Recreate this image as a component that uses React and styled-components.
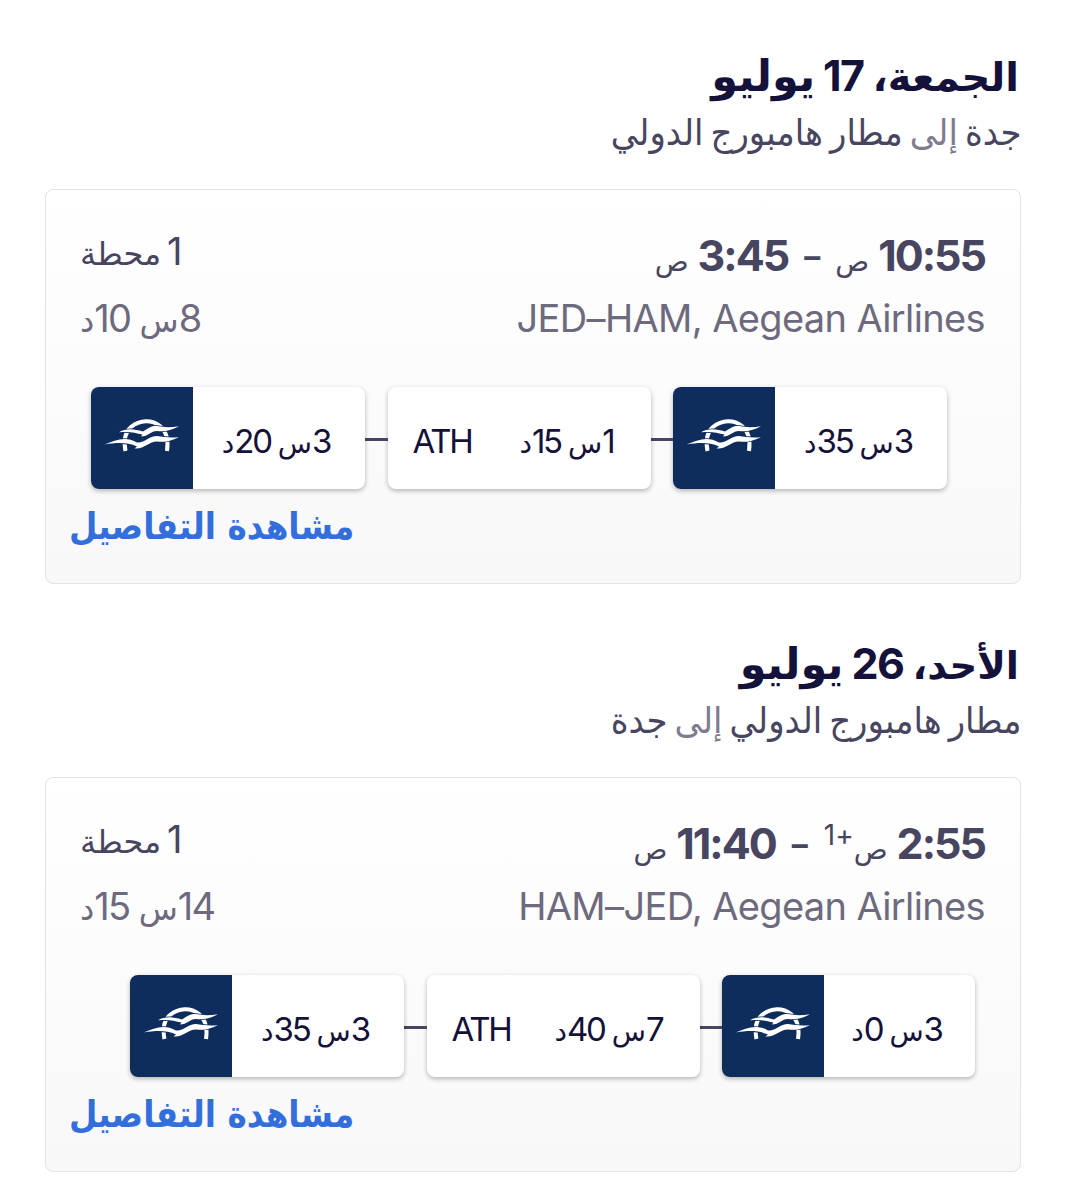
import React from "react";
import styled, { createGlobalStyle } from "styled-components";

const Global = createGlobalStyle`
  *, *::before, *::after { box-sizing: border-box; }
  body { margin: 0; background: #fff; }
`;

const Page = styled.main`
  width: 1065px;
  height: 1200px;
  overflow: hidden;
  padding: 45px 44px 0 45px;
  direction: rtl;
  font-family: Inter, "DejaVu Sans", sans-serif;
  color: #484560;
`;

const Leg = styled.section`
  height: 588px;
`;

const Heading = styled.h2`
  display: flex;
  align-items: baseline;
  height: 60px;
  margin: 0;
  padding-right: 2px;
  line-height: 60px;
  font-size: 43px;
  font-weight: 700;
  color: #14113a;
`;

const DayNumber = styled.span`
  margin: 0 9px 0 8px;
  letter-spacing: -1.5px;
`;

const Route = styled.p`
  height: 84px;
  margin: 0;
  line-height: 56px;
  white-space: nowrap;
`;

const Ar = styled.span`
  display: inline-block;
  font-family: "DejaVu Sans", sans-serif;
  font-size: ${(p) => p.$size}px;
  letter-spacing: 0;
  word-spacing: ${(p) => p.$gap || 0}px;
  transform: scaleX(${(p) => p.$stretch || 1});
  transform-origin: ${(p) => p.$origin || "right"};
  white-space: pre;
`;

const Muted = styled.span`
  color: #7f7c90;
`;

const Card = styled.article`
  width: 976px;
  height: 395px;
  padding: 33px 35px 0 34px;
  border: 1px solid #e2e2e8;
  border-radius: 8px;
  background: linear-gradient(#fff, #f8f8f9);
`;

const Row = styled.div`
  display: flex;
  justify-content: space-between;
  align-items: baseline;
  height: ${(p) => p.$h}px;
  line-height: ${(p) => p.$h}px;
  white-space: nowrap;
`;

const Times = styled.div`
  display: flex;
  align-items: baseline;
  font-size: 43px;
  font-weight: 700;
`;

const Time = styled.span`
  margin-right: -2px;
  padding-right: 2px;
  letter-spacing: -2px;
  direction: ltr;
`;

const Period = styled.span`
  margin-right: 9px;
  font-family: "DejaVu Sans", sans-serif;
  font-size: 28px;
  font-weight: 400;
`;

const Dash = styled.span`
  position: relative;
  top: -3px;
  margin: 0 15px 0 16px;
  font-size: 32px;
`;

const NextDay = styled.sup`
  align-self: flex-start;
  margin-top: -8px;
  margin-left: 1px;
  font-size: 28px;
  font-weight: 400;
  vertical-align: baseline;
`;

const Stops = styled.div`
  align-self: flex-start;
  margin-top: -4px;
  font-size: 38px;
  word-spacing: -5px;
`;

const Carrier = styled.div`
  direction: ltr;
  font-size: 38px;
  letter-spacing: -0.63px;
  color: #6d6a7e;
`;

const Total = styled.div`
  font-size: 38px;
  letter-spacing: -1.6px;
  color: #6d6a7e;
`;

const Track = styled.div`
  display: flex;
  align-items: center;
  width: max-content;
  margin-top: 38px;
  margin-right: ${(p) => p.$inset}px;
`;

const Connector = styled.span`
  width: 22.5px;
  height: 3px;
  margin-top: 2px;
  background: #484560;
`;

const Segment = styled.div`
  display: flex;
  align-items: center;
  width: ${(p) => p.$w}px;
  height: 102px;
  overflow: hidden;
  border-radius: 8px;
  background: #fff;
  box-shadow: 0 2px 5px rgba(0, 0, 0, 0.28);
  font-size: 33px;
  letter-spacing: -2.2px;
  color: #14113a;
  white-space: nowrap;
`;

const Label = styled.span`
  flex: 1;
  padding: 6px 6px 0 0;
  text-align: center;
`;

const Layover = styled.span`
  display: flex;
  flex: 1;
  justify-content: space-between;
  align-items: baseline;
  padding: 6px 37px 0 25px;
`;

const Code = styled.span`
  letter-spacing: -2.2px;
`;

const LogoTile = styled.span`
  width: 102px;
  height: 102px;
  background: #0e2c5c;
`;

const Details = styled.a`
  display: flex;
  justify-content: flex-end;
  height: 76px;
  margin-left: -11px;
  line-height: 76px;
  font-weight: 700;
  color: #326fdc;
`;

const Logo = () => (
  <LogoTile>
    <svg width="102" height="102" viewBox="0 0 102 102" fill="none">
      <path d="M34.500 64C32.500 54 33 46 40 40C49 32.500 61 32.500 69 39C76 45 77.500 54 76 64" stroke="#fff" strokeWidth="4" />
      <g fill="#fff" stroke="#0e2c5c" strokeWidth="1.6" paintOrder="stroke" strokeLinejoin="round">
        <path d="M28 45.300C36 40.500 44 42.500 52 44.500C58 40.500 61 38.500 66 39C73 40.500 80 40.500 88 39.200C80 43.500 73 45 66 44C60 44 57 49.500 50 49.500L51.500 47.500C44 46 39 44 28 45.300Z" />
        <path d="M13.500 57.500C25 52.500 35 49 46 55.500C53 56.500 58 49 66 49C72 50 79 51 88 50.200C79 54.500 73 55.500 66 54.500C58 54.500 53 62.500 43.500 61.500L46 59.500C36 55 26 55.500 13.500 57.500Z" />
      </g>
    </svg>
  </LogoTile>
);

const Duration = ({ h, m, size }) => (
  <>
    {h}
    <Ar $size={size}>س</Ar> {m}
    <Ar $size={size}>د</Ar>
  </>
);

const legs = [
  {
    day: "الجمعة،",
    daySize: 40,
    date: "17",
    route: ["جدة ", "إلى", " مطار هامبورج الدولي"],
    depart: "10:55",
    arrive: "3:45",
    carrier: "JED–HAM, Aegean Airlines",
    total: [8, 10],
    inset: 38,
    parts: [[3, 35, 274], [1, 15, 263], [3, 20, 274]],
  },
  {
    day: "الأحد،",
    daySize: 38.5,
    date: "26",
    route: ["مطار هامبورج الدولي ", "إلى", " جدة"],
    depart: "2:55",
    nextDay: true,
    arrive: "11:40",
    carrier: "HAM–JED, Aegean Airlines",
    total: [14, 15],
    inset: 10,
    parts: [[3, 0, 253], [7, 40, 273], [3, 35, 274]],
  },
];

const Flight = ({ leg }) => (
  <Leg>
    <Heading>
      <Ar $size={leg.daySize}>{leg.day}</Ar>
      <DayNumber>{leg.date}</DayNumber>
      <Ar $size={43}>يوليو</Ar>
    </Heading>
    <Route>
      <Ar $size={36} $gap={-4} $stretch={0.943}>
        {leg.route[0]}
        <Muted>{leg.route[1]}</Muted>
        {leg.route[2]}
      </Ar>
    </Route>
    <Card>
      <Row $h={64}>
        <Times>
          <Time>{leg.depart}</Time>
          <Period>ص</Period>
          {leg.nextDay && <NextDay>+1</NextDay>}
          <Dash>–</Dash>
          <Time>{leg.arrive}</Time>
          <Period>ص</Period>
        </Times>
        <Stops>
          1 <Ar $size={32}>محطة</Ar>
        </Stops>
      </Row>
      <Row $h={62}>
        <Carrier>{leg.carrier}</Carrier>
        <Total>
          <Duration h={leg.total[0]} m={leg.total[1]} size={32} />
        </Total>
      </Row>
      <Track $inset={leg.inset}>
        {leg.parts.map(([h, m, w], i) => (
          <React.Fragment key={i}>
            {i > 0 && <Connector />}
            <Segment $w={w}>
              {i === 1 ? (
                <Layover>
                  <span><Duration h={h} m={m} size={28} /></span>
                  <Code>ATH</Code>
                </Layover>
              ) : (
                <>
                  <Label><Duration h={h} m={m} size={28} /></Label>
                  <Logo />
                </>
              )}
            </Segment>
          </React.Fragment>
        ))}
      </Track>
      <Details>
        <Ar $size={37} $stretch={0.885} $origin="left">مشاهدة التفاصيل</Ar>
      </Details>
    </Card>
  </Leg>
);

export default function App() {
  return (
    <>
      <Global />
      <Page>
        {legs.map((leg) => <Flight key={leg.date} leg={leg} />)}
      </Page>
    </>
  );
}
